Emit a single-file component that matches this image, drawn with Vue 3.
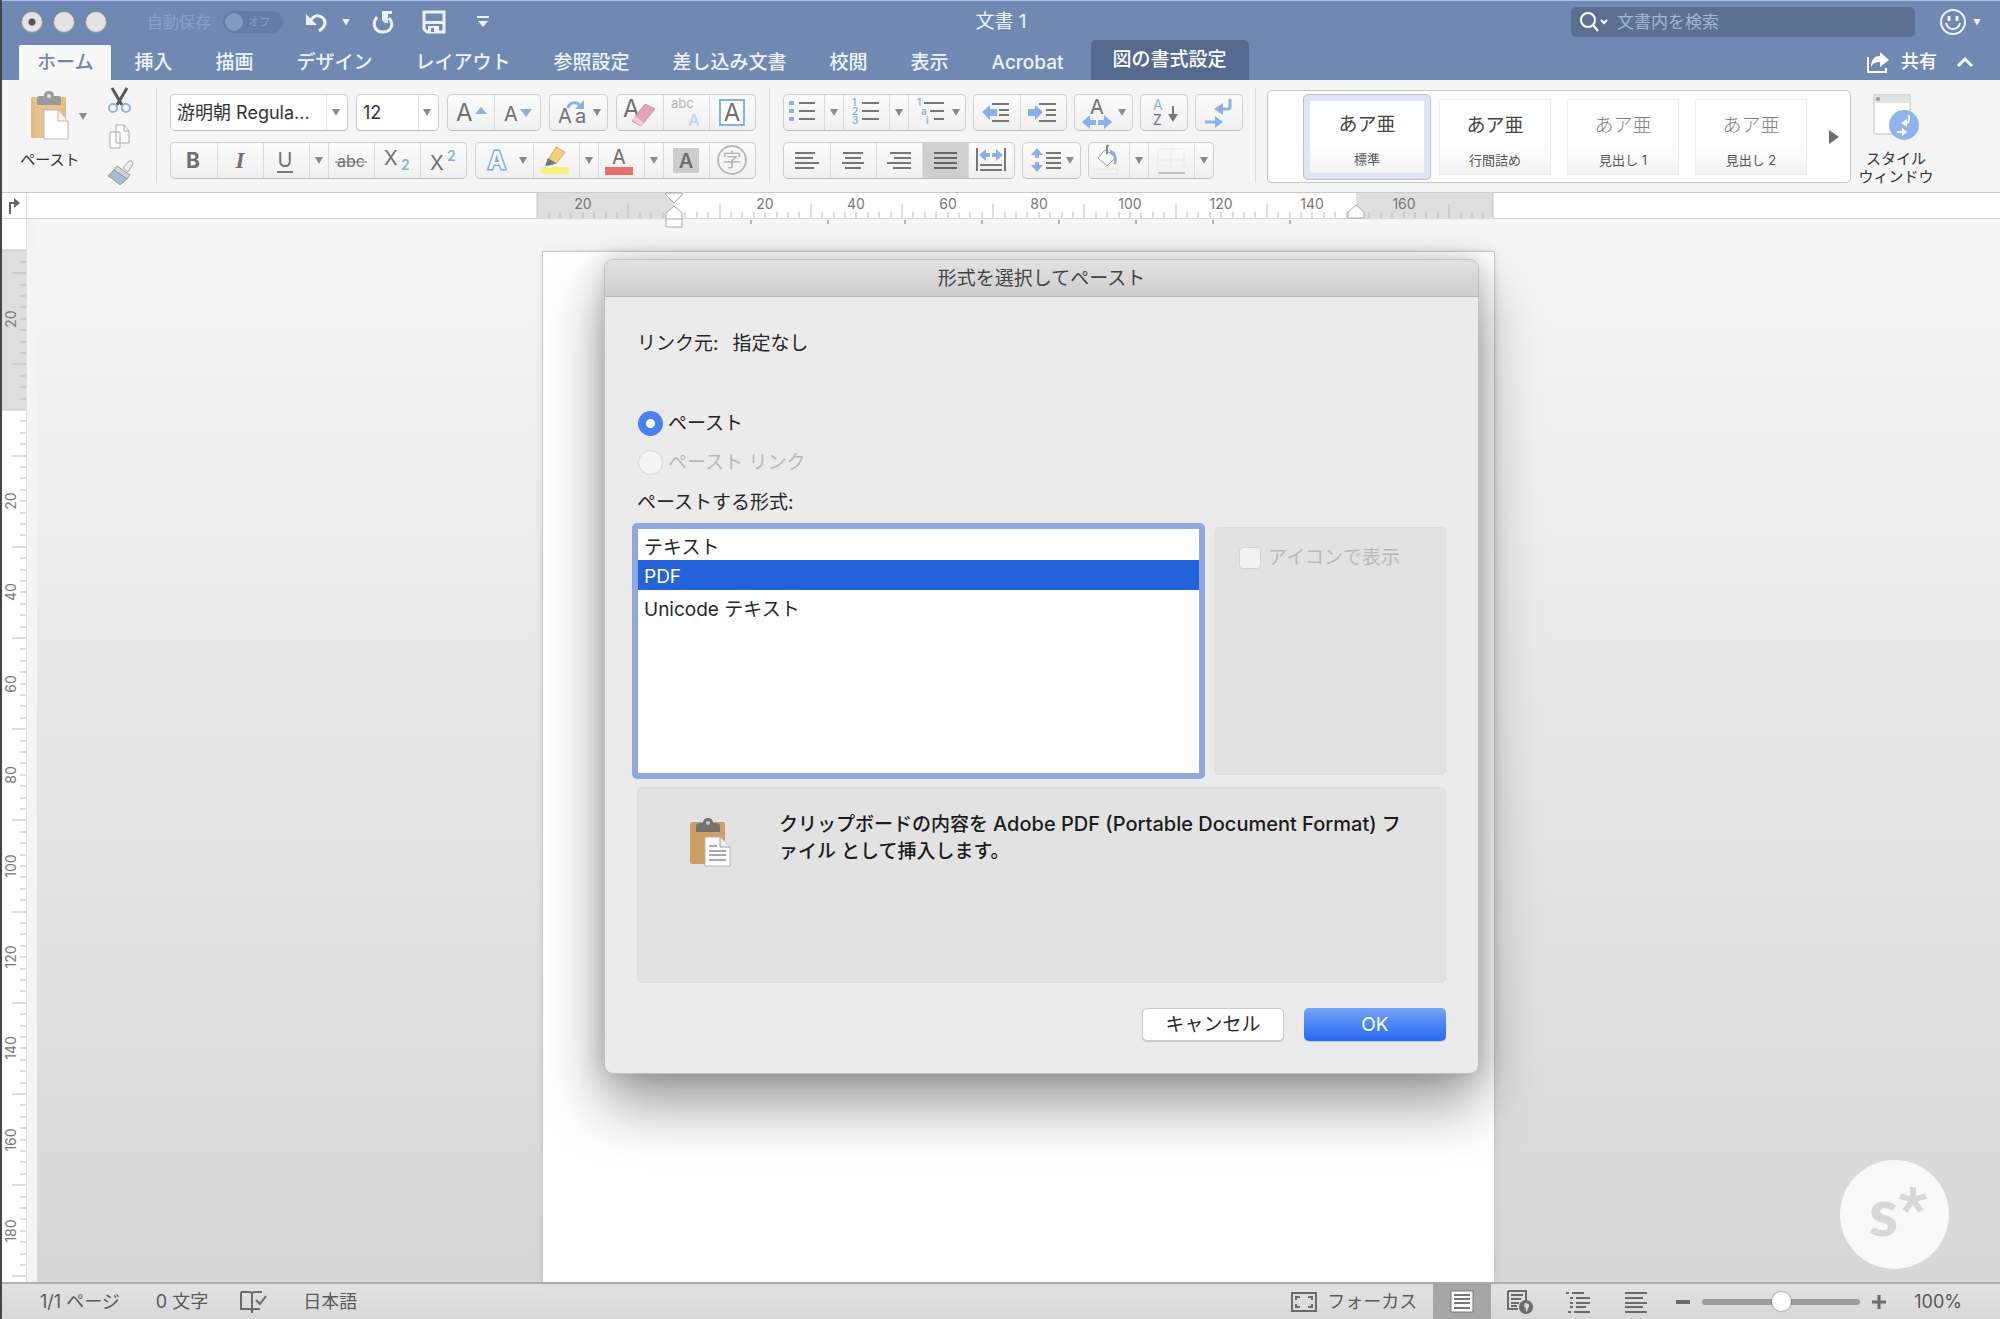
<script setup>
import { ref } from 'vue'

const tabs = ['挿入', '描画', 'デザイン', 'レイアウト', '参照設定', '差し込み文書', '校閲', '表示', 'Acrobat']
const styles = [
  { name: '標準', selected: true },
  { name: '行間詰め' },
  { name: '見出し 1', light: true },
  { name: '見出し 2', light: true },
]
const mode = ref('paste')
const format = ref('PDF')
const formats = ['テキスト', 'PDF', 'Unicode テキスト']
const zoom = ref(50)

// Rulers count in steps of 2.5 units; eight steps lie between two numbers.
const step = 11.4
function marks(from, to) {
  const list = []
  for (let i = from; i <= to; i++) {
    if (i === 0) continue
    const at = Math.round(i * step)
    const phase = ((i % 8) + 8) % 8
    list.push({ at, tall: phase === 4, label: phase === 0 ? Math.abs(i) / 8 * 20 : null })
  }
  return list
}
const across = marks(-11, 71)
const down = marks(-13, 76)
const tabStops = Array.from({ length: 8 }, (_, i) => 214 + i * 77)
</script>

<template>
  <div class="window">
    <header class="titlebar">
      <div class="bar">
        <div class="lights"><i class="dot edited"></i><i class="dot"></i><i class="dot"></i></div>
        <label class="autosave">自動保存
          <button class="toggle" type="button" role="switch" aria-checked="false" disabled><i></i>オフ</button>
        </label>
        <div class="quick">
          <button type="button" aria-label="元に戻す">
            <svg width="26" height="26" viewBox="0 0 26 26"><path d="M2 5v11h11z" fill="#eef3fb" /><path d="M6 13c3-7 9-8 13-4 4 4 2 9-4 13" fill="none" stroke="#eef3fb" stroke-width="3" /></svg>
          </button>
          <i class="tri pale"></i>
          <button type="button" aria-label="やり直し" class="redo">
            <svg width="24" height="26" viewBox="0 0 24 26"><path d="M5 8c-5 6-3 15 6 15 9 0 11-9 6-14" fill="none" stroke="#eef3fb" stroke-width="3" /><path d="M10 2h10v3h-4v9h-3l-3-3z" fill="#eef3fb" /></svg>
          </button>
          <button type="button" aria-label="保存" class="save">
            <svg width="24" height="26" viewBox="0 0 24 26"><path d="M2 3h20v20H5l-3-3z" fill="none" stroke="#eef3fb" stroke-width="3" /><path d="M3 12h18v3H3zM6 17h11v6H6z" fill="#eef3fb" /><path d="M9 19h3v4H9z" fill="#6f88b3" /></svg>
          </button>
          <button type="button" aria-label="カスタマイズ">
            <svg width="14" height="14" viewBox="0 0 14 14"><path d="M1 1h12v2H1zM2 6h10l-5 6z" fill="#eef3fb" /></svg>
          </button>
        </div>
        <h1>文書 1</h1>
        <div class="right">
          <label class="search">
            <svg width="28" height="22" viewBox="0 0 28 22"><circle cx="8" cy="9" r="7" fill="none" stroke="#fff" stroke-width="2" /><path d="M13 14l5 6M21 9l3 3 3-3" fill="none" stroke="#fff" stroke-width="2" /></svg>
            <input type="search" placeholder="文書内を検索" aria-label="文書内を検索">
          </label>
          <button type="button" aria-label="フィードバック">
            <svg width="28" height="28" viewBox="0 0 28 28"><circle cx="14" cy="14" r="12" fill="none" stroke="#eef3fb" stroke-width="2" /><path d="M7 15c2 8 12 8 14 0" fill="none" stroke="#eef3fb" stroke-width="2" /><path d="M10 8v5M18 8v5" stroke="#eef3fb" stroke-width="3" /></svg>
          </button>
          <i class="tri pale"></i>
        </div>
      </div>
      <nav class="tabs">
        <button type="button" class="tab home">ホーム</button>
        <button v-for="t in tabs" :key="t" type="button" class="tab">{{ t }}</button>
        <button type="button" class="tab context">図の書式設定</button>
        <button type="button" class="share">
          <svg width="24" height="24" viewBox="0 0 24 24"><path d="M2 7v15h18v-4" fill="none" stroke="#fff" stroke-width="2" /><path d="M5 17c0-8 4-11 9-11V2l9 8-9 7v-5c-4 0-7 1-9 5z" fill="#fff" /></svg>共有
        </button>
        <button type="button" aria-label="リボンを閉じる" class="fold">
          <svg width="18" height="12" viewBox="0 0 18 12"><path d="M2 10l7-7 7 7" fill="none" stroke="#fff" stroke-width="3" /></svg>
        </button>
      </nav>
    </header>

    <section class="ribbon">
      <div class="clipboard">
        <button type="button" class="paste">
          <svg width="42" height="50" viewBox="0 0 42 50"><rect x="2" y="6" width="35" height="41" rx="2" fill="#e3bb83" /><path d="M6 6h27v41H6z" fill="#e8c38f" /><path d="M8 14V7q0-2 3-2h4q0-5 5-5t5 5h4q3 0 3 2v7z" fill="#9a9a9a" /><circle cx="20" cy="5" r="2" fill="#e8e8e8" /><path d="M15 19h14l10 11v18H15z" fill="#fff" stroke="#b9b9b9" /><path d="M29 19v11h10" fill="#f3f3f3" stroke="#b9b9b9" /></svg>
          <span>ペースト</span>
        </button>
        <i class="tri"></i>
        <div class="tools">
          <button type="button" aria-label="切り取り"><svg width="26" height="28" viewBox="0 0 26 28"><path d="M5 1l10 17M20 1L10 18" stroke="#5a5a5a" stroke-width="3" /><circle cx="6" cy="21" r="4" fill="none" stroke="#8fb3e8" stroke-width="2" /><circle cx="19" cy="21" r="4" fill="none" stroke="#8fb3e8" stroke-width="2" /></svg></button>
          <button type="button" aria-label="コピー"><svg width="26" height="28" viewBox="0 0 26 28"><path d="M3 9h10v16H3zM9 2h8l5 6v12H9z" fill="#fff" stroke="#a9a9a9" /><path d="M17 2v6h5" fill="none" stroke="#a9a9a9" /></svg></button>
          <button type="button" aria-label="書式のコピー"><svg width="28" height="28" viewBox="0 0 28 28"><path d="M16 9l6-7q4-1 4 3l-5 8z" fill="#ececec" stroke="#aaa" /><path d="M10 7l13 9-3 4-13-9z" fill="#d3d3d3" stroke="#999" /><path d="M7 11l13 9-7 6C9 23 5 19 1 17z" fill="#a4bbdb" stroke="#9a9a9a" /></svg></button>
        </div>
      </div>
      <i class="rule"></i>

      <div class="rows font">
        <div class="row">
          <div class="combo wide"><select aria-label="フォント"><option>游明朝 Regula...</option></select><i class="tri"></i></div>
          <div class="combo"><select aria-label="サイズ"><option>12</option></select><i class="tri"></i></div>
          <div class="group">
            <button type="button" class="cell"><svg width="46" height="35"><text x="8" y="26" class="g big">A</text><path d="M27 19h12l-6-7z" fill="#8ab0e8" /></svg></button>
            <button type="button" class="cell"><svg width="46" height="35"><text x="9" y="26" class="g mid">A</text><path d="M25 14h12l-6 8z" fill="#8ab0e8" /></svg></button>
          </div>
          <div class="group">
            <button type="button" class="cell long"><svg width="46" height="35"><text x="8" y="28" class="g mid">A</text><text x="25" y="28" class="g mid">a</text><path d="M18 13c1-6 9-7 12-2" fill="none" stroke="#8ab0e8" stroke-width="3" /><path d="M25 14h9V5z" fill="#8ab0e8" /></svg><i class="tri"></i></button>
          </div>
          <div class="group">
            <button type="button" class="cell"><svg width="46" height="35"><text x="6" y="22" class="g big">A</text><path d="M28 9l10 5-14 17-9-5z" fill="#e2a5b8" stroke="#cf8da4" /><path d="M15 25l9 6 3-3-9-7z" fill="#f2cad6" /></svg></button>
            <button type="button" class="cell"><svg width="46" height="35"><text x="7" y="13" class="pale-text">abc</text><text x="24" y="31" class="sky">A</text></svg></button>
            <button type="button" class="cell"><svg width="46" height="35"><rect x="10" y="5" width="24" height="25" fill="#fff" stroke="#85b2e6" stroke-width="2" /><text x="22" y="26" text-anchor="middle" class="g big">A</text></svg></button>
          </div>
        </div>
        <div class="row">
          <div class="group">
            <button type="button" class="cell"><svg width="46" height="35"><text x="22" y="25" text-anchor="middle" class="g bold">B</text></svg></button>
            <button type="button" class="cell"><svg width="46" height="35"><text x="22" y="25" text-anchor="middle" class="g serif">I</text></svg></button>
            <button type="button" class="cell"><svg width="46" height="35"><text x="21" y="24" text-anchor="middle" class="g mid">U</text><path d="M13 29h16" stroke="#777" stroke-width="2" /></svg></button>
            <button type="button" class="cell drop" aria-label="下線の種類"><i class="tri"></i></button>
            <button type="button" class="cell"><svg width="46" height="35"><text x="22" y="24" text-anchor="middle" class="g small">abc</text><path d="M6 19h32" stroke="#777" stroke-width="1" /></svg></button>
            <button type="button" class="cell"><svg width="46" height="35"><text x="9" y="22" class="g mid">X</text><text x="26" y="27" class="blue">2</text></svg></button>
            <button type="button" class="cell"><svg width="46" height="35"><text x="9" y="27" class="g mid">X</text><text x="26" y="18" class="blue">2</text></svg></button>
          </div>
          <div class="group">
            <button type="button" class="cell long"><svg width="46" height="35"><text x="12" y="26" class="outline">A</text></svg><i class="tri"></i></button>
            <button type="button" class="cell"><svg width="46" height="35"><path d="M22 4l9 5-9 12-8-4z" fill="#f5cf80" stroke="#d9a955" /><path d="M14 15l8 5-4 2-7 1z" fill="#777" /><path d="M7 24h28v7H7z" fill="#f8f37e" /></svg></button>
            <button type="button" class="cell drop" aria-label="蛍光ペンの色"><i class="tri"></i></button>
            <button type="button" class="cell"><svg width="46" height="35"><text x="20" y="21" text-anchor="middle" class="g mid">A</text><path d="M6 24h28v8H6z" fill="#ec6e6b" /></svg></button>
            <button type="button" class="cell drop" aria-label="フォントの色"><i class="tri"></i></button>
            <button type="button" class="cell"><svg width="46" height="35"><path d="M9 5h26v25H9z" fill="#cdcdcd" /><text x="22" y="25" text-anchor="middle" class="g mid strong">A</text></svg></button>
            <button type="button" class="cell"><svg width="46" height="35"><circle cx="22" cy="17" r="14" fill="none" stroke="#b9b9b9" stroke-width="2" /><text x="22" y="24" text-anchor="middle" class="kanji">字</text></svg></button>
          </div>
        </div>
      </div>
      <i class="rule"></i>

      <div class="rows">
        <div class="row">
          <div class="group">
            <button type="button" class="cell narrow"><svg width="40" height="35"><path d="M5 6h5v4H5zM5 14h5v4H5zM5 22h5v4H5z" fill="#8ab0e8" /><path d="M15 8h16M15 16h16M15 24h16" stroke="#777" stroke-width="2" /></svg></button>
            <button type="button" class="cell drop" aria-label="行頭文字"><i class="tri"></i></button>
            <button type="button" class="cell"><svg width="46" height="35"><text x="8" y="11" class="tiny">1</text><text x="8" y="20" class="tiny">2</text><text x="8" y="29" class="tiny">3</text><path d="M18 8h17M18 16h17M18 24h17" stroke="#777" stroke-width="2" /></svg></button>
            <button type="button" class="cell drop" aria-label="段落番号"><i class="tri"></i></button>
            <button type="button" class="cell long"><svg width="46" height="35"><text x="8" y="11" class="tiny">1</text><text x="12" y="20" class="tiny">a</text><text x="17" y="29" class="tiny">i</text><path d="M15 8h20M21 16h14M25 24h10" stroke="#777" stroke-width="2" /></svg><i class="tri"></i></button>
          </div>
          <div class="group">
            <button type="button" class="cell"><svg width="46" height="35"><path d="M8 17l8-7v4h7v7h-7v4z" fill="#8ab0e8" /><path d="M18 9h17M25 15h10M25 20h10M18 26h17" stroke="#777" stroke-width="2" /></svg></button>
            <button type="button" class="cell"><svg width="46" height="35"><path d="M22 17l-8-7v4H7v7h7v4z" fill="#8ab0e8" /><path d="M18 9h17M25 15h10M25 20h10M18 26h17" stroke="#777" stroke-width="2" /></svg></button>
          </div>
          <div class="group">
            <button type="button" class="cell long"><svg width="46" height="35"><text x="22" y="19" text-anchor="middle" class="g mid">A</text><path d="M7 27l8-7v5h6v5h-6v4zM37 27l-8-7v5h-6v5h6v4z" fill="#8ab0e8" /></svg><i class="tri"></i></button>
          </div>
          <div class="group">
            <button type="button" class="cell"><svg width="46" height="35"><text x="12" y="15" class="blue plain">A</text><text x="12" y="30" class="g mini">Z</text><path d="M32 11v12" stroke="#777" stroke-width="2" /><path d="M27 19h10l-5 8z" fill="#777" /></svg></button>
          </div>
          <div class="group">
            <button type="button" class="cell"><svg width="46" height="35"><path d="M34 4v8q0 2-3 2h-6M9 27h12" fill="none" stroke="#8ab0e8" stroke-width="3" /><path d="M18 14l9-6v12zM27 27l-8-6v12z" fill="#8ab0e8" /></svg></button>
          </div>
        </div>
        <div class="row">
          <div class="group">
            <button type="button" class="cell"><svg width="46" height="35"><path d="M11 10h20M11 15h18M11 20h24M11 25h19" stroke="#777" stroke-width="2" /></svg></button>
            <button type="button" class="cell"><svg width="46" height="35"><path d="M12 10h20M14 15h16M11 20h22M14 25h16" stroke="#777" stroke-width="2" /></svg></button>
            <button type="button" class="cell"><svg width="46" height="35"><path d="M13 10h21M17 15h17M10 20h24M16 25h18" stroke="#777" stroke-width="2" /></svg></button>
            <button type="button" class="cell active"><svg width="46" height="35"><path d="M11 10h23M11 15h23M11 20h23M11 25h23" stroke="#666" stroke-width="2" /></svg></button>
            <button type="button" class="cell"><svg width="46" height="35"><path d="M8 5v23M36 5v23M11 22h22M11 27h22" stroke="#777" stroke-width="2" /><path d="M10 12l7-6v4h4v4h-4v4zM34 12l-7-6v4h-4v4h4v4z" fill="#8ab0e8" /></svg></button>
          </div>
          <div class="group">
            <button type="button" class="cell long"><svg width="46" height="35"><path d="M14 5l6 7h-4v3h-4v-3H8zM14 29l6-7h-4v-3h-4v3H8z" fill="#8ab0e8" /><path d="M23 10h15M23 15h15M23 20h15M23 25h15" stroke="#777" stroke-width="2" /></svg><i class="tri"></i></button>
          </div>
          <div class="group">
            <button type="button" class="cell narrow"><svg width="40" height="35"><path d="M16 7l11 7-9 9-9-8z" fill="#fff" stroke="#8a9bb5" stroke-width="1" /><path d="M18 11V4q0-2 2-1" fill="none" stroke="#888" stroke-width="2" /><path d="M21 8q7 3 5 13" fill="none" stroke="#8ab0e8" stroke-width="3" /><path d="M5 26h24v5H5z" fill="#f3f3f3" stroke="#e4e4e4" /></svg></button>
            <button type="button" class="cell drop" aria-label="塗りつぶしの色"><i class="tri"></i></button>
            <button type="button" class="cell"><svg width="46" height="35"><path d="M9 6h26v22M9 6v22M22 6v22M9 17h26" fill="none" stroke="#ebebeb" /><path d="M9 30h27" stroke="#c4c4c4" stroke-width="2" /></svg></button>
            <button type="button" class="cell drop" aria-label="罫線"><i class="tri"></i></button>
          </div>
        </div>
      </div>
      <i class="rule last"></i>

      <div class="gallery">
        <button v-for="s in styles" :key="s.name" type="button" class="style" :class="{ selected: s.selected, light: s.light }">
          <b>あア亜</b><span>{{ s.name }}</span>
        </button>
        <button type="button" aria-label="次のスタイル" class="next"><svg width="12" height="16"><path d="M0 1v14l10-7z" fill="#6b6b6b" /></svg></button>
      </div>
      <button type="button" class="pane">
        <svg width="50" height="50" viewBox="0 0 50 50"><path d="M3 3h36v39H3z" fill="#fff" stroke="#bdbdbd" /><path d="M4 4h34v7H4z" fill="#e3e3e3" /><circle cx="7" cy="7" r="2" fill="#999" /><circle cx="33" cy="33" r="15" fill="#8fb5ea" /><path d="M38 23v5q0 3-4 3M26 40h6" fill="none" stroke="#fff" stroke-width="2" /><path d="M30 31l6-4v8zM36 40l-5-4v8z" fill="#fff" /></svg>
        <span>スタイル<br>ウィンドウ</span>
      </button>
    </section>

    <div class="ruler">
      <span class="corner"><svg width="14" height="18" viewBox="0 0 14 18"><path d="M3 16V5h6" fill="none" stroke="#666" stroke-width="2" /><path d="M7 0l6 5-6 5z" fill="#666" /></svg></span>
      <svg class="scale" width="962" height="34">
        <path d="M0 0h137v25H0zM819 0h137v25H819z" fill="#dedede" />
        <g transform="translate(137 0)">
          <template v-for="m in across" :key="m.at">
            <text v-if="m.label !== null" :x="m.at" y="16" text-anchor="middle" class="num">{{ m.label }}</text>
            <line :x1="m.at" :x2="m.at" :y1="m.tall ? 11 : 19" y2="25" stroke="#bdbdbd" />
          </template>
        </g>
        <path d="M0 0v25M956 0v25" stroke="#c4c4c4" />
        <line v-for="x in tabStops" :key="x" :x1="x" :x2="x" y1="27" y2="31" stroke="#777" />
        <path d="M129 0h16v2l-8 8-8-8z" fill="#fff" stroke="#a8a8a8" />
        <path d="M129 34v-14l8-7 8 7v14zM129 26h16" fill="#fff" stroke="#a8a8a8" />
        <path d="M811 25v-6l8-7 8 7v6z" fill="#fff" stroke="#a8a8a8" />
      </svg>
    </div>

    <main class="work">
      <svg class="vruler">
        <path d="M0 31h25v160H0z" fill="#dedede" />
        <path d="M0 31h25M0 191h25" stroke="#c4c4c4" />
        <g transform="translate(0 191)">
          <template v-for="m in down" :key="m.at">
            <text v-if="m.label !== null" x="14" :y="m.at" :transform="`rotate(-90 14 ${m.at})`" text-anchor="middle" class="num">{{ m.label }}</text>
            <line :x1="m.tall ? 10 : 18" x2="25" :y1="m.at" :y2="m.at" stroke="#bdbdbd" />
          </template>
        </g>
      </svg>
      <div class="canvas">
        <article class="page">
          <form class="dialog" role="dialog" aria-labelledby="dialog-title" @submit.prevent>
            <h2 id="dialog-title">形式を選択してペースト</h2>
            <div class="body">
              <p class="source"><span>リンク元:</span><span>指定なし</span></p>
              <label class="choice"><input v-model="mode" type="radio" name="mode" value="paste">ペースト</label>
              <label class="choice off"><input v-model="mode" type="radio" name="mode" value="link" disabled>ペースト リンク</label>
              <label for="formats" class="caption">ペーストする形式:</label>
              <div class="pick">
                <select id="formats" v-model="format" size="6">
                  <option v-for="f in formats" :key="f" :value="f">{{ f }}</option>
                </select>
                <div class="panel side">
                  <label class="off"><input type="checkbox" disabled>アイコンで表示</label>
                </div>
              </div>
              <div class="panel result">
                <svg width="44" height="50" viewBox="0 0 44 50"><rect x="1" y="5" width="35" height="42" rx="2" fill="#cda065" /><path d="M7 15V9q0-3 4-3h3q0-5 5-5t5 5h3q4 0 4 3v6z" fill="#737371" /><circle cx="19" cy="6" r="2" fill="#c8c8c8" /><path d="M16 20h15l10 10v19H16z" fill="#fff" stroke="#b5b5b5" /><path d="M31 20v10h10" fill="#eee" stroke="#999" /><path d="M20 29h8M20 34h17M20 38h17M20 43h17" stroke="#aaa" stroke-width="2" /></svg>
                <p>クリップボードの内容を <span lang="en">Adobe PDF (Portable Document Format)</span> フ<br>ァイル として挿入します。</p>
              </div>
              <div class="actions">
                <button type="button" class="btn">キャンセル</button>
                <button type="submit" class="btn ok">OK</button>
              </div>
            </div>
          </form>
        </article>
        <div class="badge"><span>s</span><svg width="30" height="30" viewBox="0 0 30 30"><path d="M15 15V2M15 15L2 11M15 15l13-4M15 15L7 26M15 15l8 11" stroke="#d8d8d8" stroke-width="6" /></svg></div>
      </div>
    </main>

    <footer class="status">
      <span class="pages">1/1 ページ</span>
      <span class="words">0 文字</span>
      <svg class="proof" width="28" height="26" viewBox="0 0 28 26"><path d="M13 4v20M2 3h8q3 0 3 2 0-2 3-2h7M2 3v17h8q3 0 3 2 0-2 3-2h5" fill="none" stroke="#6b6b6b" stroke-width="2" /><path d="M17 11l4 4 6-8" fill="none" stroke="#6b6b6b" stroke-width="2" /></svg>
      <span>日本語</span>
      <button type="button" class="focus"><svg width="26" height="20" viewBox="0 0 26 20"><path d="M1 1h24v18H1z" fill="none" stroke="#6b6b6b" stroke-width="2" /><path d="M5 8V5h4M17 5h4v3M5 12v3h4M17 15h4v-3" fill="none" stroke="#6b6b6b" stroke-width="2" /></svg>フォーカス</button>
      <button type="button" class="view on" aria-label="印刷レイアウト"><svg width="24" height="24" viewBox="0 0 24 24"><path d="M1 1h22v21H1z" fill="#fff" stroke="#777" /><path d="M4 5h16M4 9h16M4 13h16M4 18h16" stroke="#777" stroke-width="2" /></svg></button>
      <button type="button" class="view" aria-label="Web レイアウト"><svg width="28" height="26" viewBox="0 0 28 26"><path d="M2 2h18v9M2 2v18h10" fill="none" stroke="#6b6b6b" stroke-width="2" /><path d="M5 6h12M5 10h10M5 14h8M5 17h6" stroke="#6b6b6b" stroke-width="2" /><circle cx="20" cy="18" r="7" fill="#6b6b6b" /><path d="M19 14q5 0 4 4-2 2-2 5-2-1-1-4-3-1-1-5z" fill="#dadada" /></svg></button>
      <button type="button" class="view" aria-label="アウトライン"><svg width="28" height="24" viewBox="0 0 28 24"><path d="M2 3h3M8 3h12M6 8h3M12 8h14M6 13h3M12 13h14M6 17h3M12 17h10M4 22h3M10 22h16" stroke="#6b6b6b" stroke-width="2" /></svg></button>
      <button type="button" class="view" aria-label="下書き"><svg width="24" height="24" viewBox="0 0 24 24"><path d="M1 3h22M1 8h18M1 13h22M1 17h18M1 22h22" stroke="#6b6b6b" stroke-width="2" /></svg></button>
      <div class="zoom">
        <button type="button" aria-label="縮小"><svg width="14" height="14"><path d="M0 7h14" stroke="#6b6b6b" stroke-width="4" /></svg></button>
        <input v-model="zoom" type="range" min="0" max="100" aria-label="ズーム">
        <button type="button" aria-label="拡大"><svg width="14" height="14"><path d="M0 7h14M7 0v14" stroke="#6b6b6b" stroke-width="3" /></svg></button>
        <span>100%</span>
      </div>
    </footer>
  </div>
</template>

<style>
body { margin: 0; }
</style>

<style scoped>
* { box-sizing: border-box; }
.window {
  display: flex; flex-direction: column; height: 100vh; overflow: hidden;
  border-left: 2px solid #45464c; background: #f5f5f5; color: #333;
  font: 18px/24px Inter, "Noto Sans CJK JP", sans-serif;
}
button { border: 0; padding: 0; background: none; font: inherit; color: inherit; display: flex; align-items: center; }
input, select { font: inherit; color: inherit; margin: 0; }
svg { display: block; flex: none; }
h1, h2, p { margin: 0; font-weight: 400; }
.tri { flex: none; width: 8px; height: 7px; background: #8a8a8a; clip-path: polygon(0 0, 100% 0, 50% 100%); }
.tri.pale { background: #eef3fb; }

.titlebar { background: #7089b3; border-top: 1px solid #a8c2e6; color: #eef3fb; height: 80px; flex: none; }
.bar { position: relative; display: flex; align-items: center; height: 42px; }
.lights { display: flex; gap: 12px; margin-left: 20px; }
.dot { width: 20px; height: 20px; border-radius: 50%; background: #e4e3e1; box-shadow: 0 0 0 1px #8d95a3; }
.dot.edited { background: radial-gradient(circle, #55534f 0 3px, #e4e3e1 4px); }
.autosave { display: flex; align-items: center; gap: 12px; margin-left: 41px; font-size: 16px; color: #8b9fc4; }
.toggle { gap: 5px; width: 60px; height: 22px; padding: 0 2px; border-radius: 11px; background: #647ca6; font-size: 11px; color: #8b9fc4; }
.toggle i { width: 18px; height: 18px; border-radius: 50%; background: #8499c0; }
.quick { display: flex; align-items: center; margin-left: 21px; }
.quick .tri { margin-left: 12px; }
.redo { margin-left: 22px; }
.save { margin-left: 26px; }
.save + button { margin-left: 30px; }
h1 { position: absolute; left: 0; right: 0; text-align: center; font-size: 19px; line-height: 26px; pointer-events: none; }
.right { display: flex; align-items: center; margin-left: auto; margin-right: 19px; }
.right button { margin: 0 6px 0 24px; }
.search { display: flex; align-items: center; width: 344px; height: 30px; padding-left: 9px; border-radius: 5px; background: #5c7094; }
.search input { flex: 1; min-width: 0; margin-left: 9px; padding: 0; border: 0; outline: 0; background: none; font-size: 17px; }
.search input::placeholder { color: #a5b5d2; }
.tabs { display: flex; height: 37px; gap: 1px; padding-left: 17px; align-items: flex-end; }
.tab { height: 35px; padding: 1px 21px 0; font-size: 19px; font-weight: 500; }
.tab.home { margin-right: 1px; padding: 1px 18px 0; background: #f8f8f8; color: #7089b3; border-radius: 2px 2px 0 0; }
.tab.context { height: 40px; margin-left: 5px; padding: 0 22px; background: #566a8f; border-radius: 5px 5px 0 0; color: #fff; }
.share { gap: 11px; height: 36px; margin-left: auto; font-weight: 500; color: #fff; }
.fold { height: 36px; margin: 0 26px 0 18px; }

.ribbon { display: flex; flex: none; height: 113px; border-bottom: 1px solid #cacaca; background: #f5f5f5; }
.rule { flex: none; width: 1px; margin: 8px 13px 9px 13px; background: #dcdcdc; }
.rule.last { margin: 8px 11px 9px 12px; }
.clipboard { display: flex; margin-left: 18px; width: 123px; }
.paste { flex-direction: column; width: 60px; padding-top: 11px; font-size: 15px; line-height: 20px; white-space: nowrap; }
.paste span { margin-top: 9px; }
.clipboard .tri { margin: 33px 0 0 -1px; }
.tools { display: flex; flex-direction: column; gap: 8px; margin: 7px 0 0 20px; }
.rows { display: flex; flex-direction: column; gap: 11px; padding-top: 14px; flex: none; }
.row { display: flex; gap: 7px; }
.font .row { gap: 8px; }
.combo, .group { display: flex; height: 37px; border: 1px solid #cfcfcf; border-bottom-color: #bdbdbd; border-radius: 5px; background: linear-gradient(#fcfcfc, #f0f0f0); }
.combo { position: relative; width: 83px; background: linear-gradient(90deg, transparent 61px, #e6e6e6 61px 62px, transparent 62px) #fff; }
.combo.wide { width: 178px; background: linear-gradient(90deg, transparent 155px, #e6e6e6 155px 156px, transparent 156px) #fff; }
.combo select { width: 100%; border: 0; padding: 0 0 0 6px; background: none; appearance: none; outline: 0; font-size: 18px; }
.combo .tri { position: absolute; right: 7px; top: 14px; pointer-events: none; }
.cell { width: 46px; justify-content: center; }
.cell + .cell { border-left: 1px solid #dcdcdc; }
.cell.drop { width: 19px; }
.cell.narrow { width: 40px; }
.cell.long { width: 57px; justify-content: flex-start; }
.cell.long .tri { margin-left: -3px; }
.cell.active { background: #cfcfcf; }
.g { fill: #707070; }
.big { font-size: 24px; }
.mid { font-size: 20px; }
.small { font-size: 16px; }
.mini { font-size: 14px; }
.bold { font-size: 21px; font-weight: 700; }
.strong { font-weight: 600; }
.serif { font: italic 700 23px "Liberation Serif", serif; }
.pale-text { fill: #b5b5b5; font-size: 13px; }
.kanji { fill: #b5b5b5; font-size: 19px; }
.sky { fill: #c3d4f0; font-size: 16px; font-weight: 600; }
.blue { fill: #8ab0e8; font-size: 14px; font-weight: 600; }
.plain { font-weight: 400; }
.tiny { fill: #8ab0e8; font-size: 10px; font-weight: 600; }
.outline { fill: #fff; stroke: #7fa9e0; stroke-width: 3px; font-size: 24px; font-weight: 600; paint-order: stroke; }

.gallery { display: flex; align-items: center; width: 584px; height: 93px; margin-top: 10px; padding-left: 35px; gap: 16px; flex: none; border: 1px solid #c6c6c6; border-radius: 5px; background: #fff; }
.style { flex-direction: column; width: 112px; height: 76px; padding-top: 11px; border: 1px solid #ececec; background: linear-gradient(#fff 60%, #f4f4f4); font-size: 13px; line-height: 18px; color: #555; }
.style b { margin-bottom: 14px; font: 400 19px/26px "Noto Sans CJK JP", sans-serif; color: #444; }
.style.light b { color: #7d7d7d; font-weight: 300; }
.style.selected { width: 128px; height: 86px; margin-right: -8px; padding-top: 9px; border: 7px solid #dfe5f3; outline: 1px solid #b5c1de; outline-offset: -1px; border-radius: 5px; }
.next { margin-left: 6px; }
.pane { flex-direction: column; width: 90px; padding-top: 12px; font-size: 15px; line-height: 18px; text-align: center; }
.pane span { margin-top: 8px; }

.ruler { display: flex; justify-content: center; flex: none; height: 26px; background: #fff; border-bottom: 1px solid #d8d8d8; position: relative; z-index: 1; padding-left: 34px; }
.corner { position: absolute; left: 0; top: 0; width: 25px; height: 25px; padding: 5px 5px; border-right: 1px solid #e4e4e4; }
.scale { overflow: visible; }
.num { fill: #777; font-size: 14px; }

.work { display: flex; flex: 1; min-height: 0; }
.vruler { width: 25px; height: auto; background: #fff; border-right: 1px solid #e0e0e0; }
.canvas { position: relative; display: flex; justify-content: center; flex: 1; padding-top: 32px; border-left: 10px solid #f4f4f4; background: linear-gradient(#f6f6f6, #d7d7d7); }
.page { position: relative; width: 953px; background: #fff; border: 1px solid #c9c9c9; border-bottom: 0; box-shadow: 0 0 8px #00000018; }
.badge { position: absolute; right: 51px; bottom: 13px; display: flex; justify-content: center; width: 109px; height: 109px; padding-left: 8px; border-radius: 50%; background: #f9f9f9; color: #d8d8d8; font: 900 66px/102px Lato, sans-serif; }
.badge svg { margin-top: 25px; }

.dialog { position: absolute; left: 61px; top: 7px; width: 875px; border: 1px solid #c0c0c0; border-radius: 9px; background: #ebebeb; box-shadow: 0 30px 60px #00000066, 0 0 24px #0000002b; font-size: 19px; line-height: 27px; color: #262626; }
.dialog h2 { height: 37px; border-bottom: 1px solid #b8b8b8; border-radius: 8px 8px 0 0; background: linear-gradient(#e2e2e2, #cdcdcd); font-size: 19px; line-height: 38px; text-align: center; color: #444; }
.body { display: flex; flex-direction: column; padding: 33px 32px 32px 32px; }
.source { display: flex; gap: 14px; margin-bottom: 52px; }
.choice { display: flex; align-items: center; gap: 5px; height: 29px; margin: 0 0 10px 1px; }
.off { color: #b9b9b9; }
.choice input { appearance: none; width: 25px; height: 25px; border-radius: 50%; border: 1px solid #d8d8d8; background: #f4f4f4; }
.choice input:checked { border: 0; background: radial-gradient(circle, #fff 0 4px, #4882f0 5px); }
.caption { margin-top: 2px; }
.pick { display: flex; gap: 9px; margin: 7px 0 0 -5px; align-items: center; }
#formats { width: 573px; height: 256px; padding: 0; border: 6px solid #8fa8e0; border-radius: 5px; outline: 0; background: #fff; overflow: hidden; }
#formats option { display: flex; align-items: center; height: 30px; min-height: 30px; padding: 2px 0 0 6px; margin-bottom: 1px; }
#formats option:checked { background: linear-gradient(#2463da, #2463da); -webkit-text-fill-color: #fff; }
.panel { border: 1px solid #dedede; border-radius: 5px; background: #e2e2e2; }
.side { flex: 1; height: 248px; padding: 16px 0 0 24px; }
.side label { display: flex; align-items: center; gap: 7px; }
.side input { appearance: none; width: 22px; height: 22px; border: 1px solid #d5d5d5; border-radius: 4px; background: #f2f2f2; }
.result { display: flex; height: 196px; margin-top: 8px; padding: 23px 24px 0 51px; }
.result svg { margin-top: 6px; margin-right: 46px; }
.result p { flex: 1; color: #1c1c1c; white-space: nowrap; font-weight: 500; }
.result p span { font-size: 20px; }
.actions { display: flex; justify-content: flex-end; gap: 20px; margin-top: 25px; }
.btn { justify-content: center; width: 142px; height: 33px; border: 1px solid #cbcbcb; border-radius: 5px; background: #fff; box-shadow: 0 1px 1px #00000026; }
.btn.ok { border: 0; background: linear-gradient(#74a3f7, #2468f2); color: #fff; }

.status { display: flex; align-items: center; flex: none; height: 37px; border-top: 2px solid #b0b0b0; background: linear-gradient(#e2e2e2, #d8d8d8); color: #5a5a5a; }
.pages { margin-left: 38px; }
.words { margin-left: 36px; }
.proof { margin: 0 36px 0 31px; }
.focus { gap: 10px; margin-left: auto; margin-right: 16px; }
.view { justify-content: center; width: 58px; height: 35px; }
.view.on { background: #a6a6a6; }
.zoom { display: flex; align-items: center; gap: 12px; margin-left: 11px; margin-right: 38px; }
.zoom span { margin-left: 16px; }
.zoom input { appearance: none; width: 158px; height: 6px; border-radius: 3px; background: #9c9c9c; }
.zoom input::-webkit-slider-thumb { appearance: none; width: 19px; height: 19px; border-radius: 50%; background: #fff; box-shadow: 0 0 1px 1px #00000030; }
</style>
